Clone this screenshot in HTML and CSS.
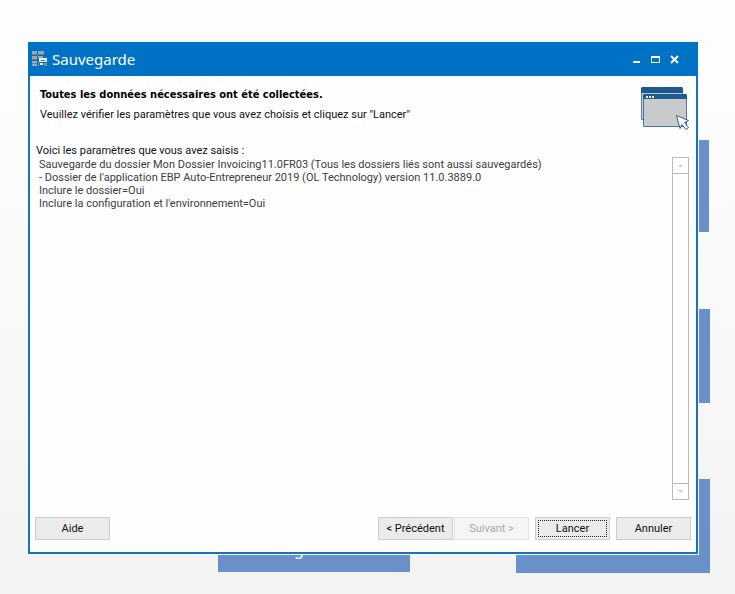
FILE: index.html
```html
<!DOCTYPE html>
<html lang="fr">
<head>
<meta charset="utf-8">
<title>Sauvegarde</title>
<link rel="stylesheet" href="styles.css">
</head>
<body>
<div class="desktop">
  <div class="tile tile-top"></div>
  <div class="tile tile-middle"></div>
  <div class="tile tile-corner"></div>
  <div class="tile tile-bottom">g</div>

  <main class="window">
    <header class="titlebar">
      <svg class="app-icon" width="15" height="16" viewBox="0 0 15 16" aria-hidden="true">
        <path fill="#a8a4a6" d="M0 0h5v4H0zM6 0h6v4H6zM0 5h5v4H0zM6 5h5v2H6zM0 10h5v5H0z"/>
        <path fill="#6f7f92" d="M0 3h12v1H0zM0 8h5v1H0zM0 12h5v1H0z"/>
        <path fill="#eef2f6" d="M7 7h8v4H7zM8 12h3v2H8z"/>
        <path fill="#2f78b4" d="M9 9h4v1H9z"/>
        <path fill="#8b929c" d="M12 12h3v3h-3zM6 11h1v4H6z"/>
      </svg>
      <h1 class="title">Sauvegarde</h1>
      <div class="window-controls">
        <button class="control" type="button" aria-label="Réduire">
          <svg width="9" height="9" viewBox="0 0 9 9"><path fill="#fff" d="M1 6h7v2H1z"/></svg>
        </button>
        <button class="control" type="button" aria-label="Agrandir">
          <svg width="9" height="9" viewBox="0 0 9 9"><path fill="#fff" fill-rule="evenodd" d="M0 1h9v7H0zM1 3v4h7V3z"/></svg>
        </button>
        <button class="control" type="button" aria-label="Fermer">
          <svg width="9" height="9" viewBox="0 0 9 9"><path stroke="#fff" stroke-width="2" d="M1 1l7 7M8 1L1 8"/></svg>
        </button>
      </div>
    </header>

    <section class="intro">
      <div class="intro-text">
        <h2 class="heading">Toutes les données nécessaires ont été collectées.</h2>
        <p class="hint">Veuillez vérifier les paramètres que vous avez choisis et cliquez sur "Lancer"</p>
      </div>
      <svg class="intro-icon" width="50" height="44" viewBox="0 0 50 44" aria-hidden="true">
        <path fill="#c9cacc" stroke="#5682a8" d="M1.500 1.500h41v31h-41z"/>
        <path fill="#1d5a92" d="M2 0h40l1 1v5H1V1z"/>
        <path fill="#c9cacc" stroke="#4678a3" d="M3.500 8.500h43v31h-43z"/>
        <path fill="#1d5a92" d="M4 7h42l1 1v4H3V8z"/>
        <path fill="#fff" d="M6 9h2v2H6zM9 9h2v2H9zM12 9h2v2h-2z"/>
        <path fill="#fff" stroke="#2b638f" d="M36.500 28.500l12 5-4 2 4 5-2.500 2-4-5-2 4z"/>
      </svg>
    </section>

    <section class="summary">
      <h3 class="summary-title">Voici les paramètres que vous avez saisis :</h3>
      <div class="summary-body">
        <div class="summary-text">
          <p>Sauvegarde du dossier Mon Dossier Invoicing11.0FR03 (Tous les dossiers liés sont aussi sauvegardés)</p>
          <p>- Dossier de l'application EBP Auto-Entrepreneur 2019 (OL Technology) version 11.0.3889.0</p>
          <p>Inclure le dossier=Oui</p>
          <p>Inclure la configuration et l'environnement=Oui</p>
        </div>
        <div class="scrollbar">
          <button class="scroll-step" type="button" disabled aria-label="Défiler vers le haut">
            <svg width="5" height="3" viewBox="0 0 5 3"><path fill="#d0d0d0" d="M0 3l2.500-3L5 3z"/></svg>
          </button>
          <button class="scroll-step" type="button" disabled aria-label="Défiler vers le bas">
            <svg width="5" height="3" viewBox="0 0 5 3"><path fill="#d0d0d0" d="M0 0l2.500 3L5 0z"/></svg>
          </button>
        </div>
      </div>
    </section>

    <footer class="actions">
      <button class="button" type="button">Aide</button>
      <div class="steps">
        <button class="button" type="button">&lt; Précédent</button>
        <button class="button" type="button" disabled>Suivant &gt;</button>
      </div>
      <button class="button button-default" type="button">Lancer</button>
      <button class="button" type="button">Annuler</button>
    </footer>
  </main>
</div>
</body>
</html>
```
FILE: styles.css
```css
* {
  box-sizing: border-box;
}

body {
  margin: 0;
  font: 11px/13px Roboto, sans-serif;
  color: #111;
}

h1, h2, h3, p {
  margin: 0;
}

button {
  font: inherit;
  color: inherit;
}

.desktop {
  position: relative;
  display: flex;
  min-height: 100vh;
  padding: 42px 37px 40px 28px;
  overflow: hidden;
  background: linear-gradient(#fefefe, #f9f9f9 50%, #f3f3f3);
}

.tile {
  position: absolute;
  background: #6990c8;
}

.tile-top {
  top: 140px;
  right: 26px;
  width: 191px;
  height: 92px;
}

.tile-middle {
  top: 309px;
  right: 25px;
  width: 193px;
  height: 94px;
}

.tile-corner {
  top: 479px;
  right: 25px;
  width: 194px;
  height: 94px;
}

.tile-bottom {
  top: 479px;
  left: 218px;
  width: 192px;
  height: 93px;
  padding: 61px 0 0 76px;
  color: #fff;
  font: 16px/18px "Noto Sans", sans-serif;
}

.window {
  position: relative;
  flex: 1;
  display: flex;
  flex-direction: column;
  border: 2px solid #1474b4;
  background: #fefefe;
  box-shadow: 1px 1px #f4f8fc;
}

.titlebar {
  display: flex;
  align-items: center;
  gap: 5px;
  height: 34px;
  margin: -2px -2px 0;
  padding: 0 19px 0 4px;
  background: #0072c6;
  color: #fff;
}

.title {
  flex: 1;
  font: 15px/20px "Noto Sans", sans-serif;
}

.window-controls {
  display: flex;
  gap: 10px;
}

.control {
  display: flex;
  padding: 0;
  border: 0;
  background: none;
}

.intro {
  display: flex;
  justify-content: space-between;
  padding: 11px 6px 0 10px;
}

.heading {
  margin-top: 1px;
  font: bold 11px/13px "DejaVu Sans Condensed", "DejaVu Sans", sans-serif;
  font-stretch: condensed;
  color: #000;
}

.hint {
  margin-top: 7px;
}

.summary {
  flex: 1;
  display: flex;
  flex-direction: column;
  padding: 13px 7px 0 6px;
}

.summary-title {
  font-size: 11px;
  line-height: 13px;
  font-weight: normal;
}

.summary-body {
  flex: 1;
  display: flex;
  justify-content: space-between;
}

.summary-text {
  padding: 1px 0 0 3px;
  color: #3c3c3c;
}

.scrollbar {
  display: flex;
  flex-direction: column;
  justify-content: space-between;
  width: 17px;
  border: 1px solid #bababa;
}

.scroll-step {
  display: flex;
  align-items: center;
  justify-content: center;
  height: 16px;
  padding: 0;
  border: 0 solid #bababa;
  background: #fefefe;
}

.scroll-step:first-child {
  border-bottom-width: 1px;
}

.scroll-step:last-child {
  border-top-width: 1px;
}

.actions {
  display: flex;
  gap: 6px;
  padding: 17px 5px 12px;
}

.steps {
  display: flex;
  gap: 1px;
  margin-left: auto;
}

.button {
  width: 75px;
  height: 23px;
  padding: 0;
  border: 1px solid #cdcdcd;
  background: #ebebeb;
}

.button:disabled {
  border-color: #e2e2e2;
  background: #f5f5f5;
  color: #a9a9a9;
}

.button-default {
  outline: 1px dotted #222;
  outline-offset: -4px;
}
```
